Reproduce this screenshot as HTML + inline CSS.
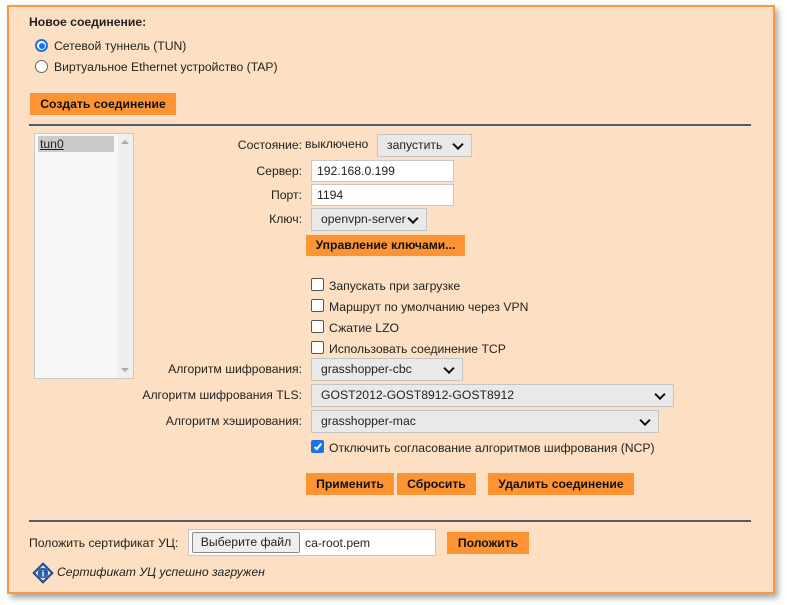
<!DOCTYPE html>
<html><head><meta charset="utf-8"><style>
*{box-sizing:border-box}
body{margin:0;width:787px;height:605px;background:#fff;font-family:"Liberation Sans","DejaVu Sans",sans-serif;font-size:12.2px;color:#222;position:relative;overflow:hidden}
.p{position:absolute;left:7px;top:5px;width:768px;height:589px;background:#fde0c3;border:2px solid #fb9a3c;box-shadow:3px 4px 6px rgba(0,0,0,.35)}
.a{position:absolute;white-space:nowrap;line-height:16px}
.btn{position:absolute;background:#fd9433;font-weight:bold;color:#111;text-align:center;font-size:12.2px}
.in{position:absolute;background:#fff;border:1px solid #c8c8c8;padding-left:5px}
.sel{position:absolute;background:#e9e9e9;border:1px solid #c4c4c4;padding-left:9px}
.sel:after{content:"";position:absolute;right:9px;top:50%;width:6px;height:6px;border-right:2px solid #111;border-bottom:2px solid #111;transform:translateY(-70%) rotate(45deg)}
.cb{position:absolute;width:13px;height:13px;border:1px solid #555;border-radius:2px;background:#fff}
.rad{position:absolute;width:13px;height:13px;border:1px solid #666;border-radius:50%;background:#fff}
.line{position:absolute;left:29px;width:722px;height:1.5px;background:#4a5e6e}
.r{text-align:right}
</style></head><body>
<div class="p"></div>
<div class="a" style="left:29px;top:14px;font-weight:bold">Новое соединение:</div>
<div class="rad" style="left:35px;top:39px;border:2px solid #1a73e8"><div style="position:absolute;left:1.5px;top:1.5px;width:6px;height:6px;border-radius:50%;background:#1a73e8"></div></div>
<div class="a" style="left:54px;top:38px">Сетевой туннель (TUN)</div>
<div class="rad" style="left:35px;top:60px"></div>
<div class="a" style="left:54px;top:59px">Виртуальное Ethernet устройство (TAP)</div>
<div class="btn" style="left:30px;top:93px;width:146px;height:22px;line-height:22px">Создать соединение</div>
<div class="line" style="top:124px"></div>

<div style="position:absolute;left:34px;top:133px;width:100px;height:246px;background:#f7f7f7;border:1px solid #c9c9c9">
 <div style="position:absolute;left:3px;top:2px;width:76px;height:16px;background:#cbcbcb;padding-left:2px;text-decoration:underline;line-height:16px">tun0</div>
 <div style="position:absolute;right:0;top:0;width:15px;height:244px;background:#efefef"></div>
 <div style="position:absolute;right:4px;top:6px;border:4px solid transparent;border-bottom:4px solid #aaa;border-top:0"></div>
 <div style="position:absolute;right:4px;bottom:6px;border:4px solid transparent;border-top:4px solid #aaa;border-bottom:0"></div>
</div>

<div class="a r" style="left:150px;width:152px;top:137px">Состояние:</div>
<div class="a" style="left:305px;top:136px">выключено</div>
<div class="sel" style="left:377px;top:134px;width:95px;height:23px;line-height:21px">запустить</div>
<div class="a r" style="left:150px;width:152px;top:163px">Сервер:</div>
<div class="in" style="left:311px;top:160px;width:143px;height:22px;line-height:20px">192.168.0.199</div>
<div class="a r" style="left:150px;width:152px;top:187px">Порт:</div>
<div class="in" style="left:311px;top:184px;width:143px;height:22px;line-height:20px">1194</div>
<div class="a r" style="left:150px;width:152px;top:211px">Ключ:</div>
<div class="sel" style="left:311px;top:208px;width:116px;height:23px;line-height:21px">openvpn-server</div>
<div class="btn" style="left:306px;top:235px;width:159px;height:21px;line-height:21px">Управление ключами...</div>

<div class="cb" style="left:311px;top:278px"></div><div class="a" style="left:329px;top:278px">Запускать при загрузке</div>
<div class="cb" style="left:311px;top:299px"></div><div class="a" style="left:329px;top:299px">Маршрут по умолчанию через VPN</div>
<div class="cb" style="left:311px;top:320px"></div><div class="a" style="left:329px;top:320px">Сжатие LZO</div>
<div class="cb" style="left:311px;top:341px"></div><div class="a" style="left:329px;top:341px">Использовать соединение TCP</div>

<div class="a r" style="left:100px;width:202px;top:361px">Алгоритм шифрования:</div>
<div class="sel" style="left:311px;top:358px;width:152px;height:23px;line-height:21px">grasshopper-cbc</div>
<div class="a r" style="left:100px;width:202px;top:387px">Алгоритм шифрования TLS:</div>
<div class="sel" style="left:311px;top:384px;width:363px;height:23px;line-height:21px">GOST2012-GOST8912-GOST8912</div>
<div class="a r" style="left:100px;width:202px;top:413px">Алгоритм хэширования:</div>
<div class="sel" style="left:311px;top:410px;width:348px;height:23px;line-height:21px">grasshopper-mac</div>

<div class="cb" style="left:311px;top:440px;background:#1a73e8;border-color:#1a73e8"><div style="position:absolute;left:3.5px;top:0.5px;width:4px;height:8px;border-right:2px solid #fff;border-bottom:2px solid #fff;transform:rotate(40deg)"></div></div>
<div class="a" style="left:329px;top:440px">Отключить согласование алгоритмов шифрования (NCP)</div>

<div class="btn" style="left:306px;top:473px;width:88px;height:22px;line-height:22px">Применить</div>
<div class="btn" style="left:397px;top:473px;width:79px;height:22px;line-height:22px">Сбросить</div>
<div class="btn" style="left:488px;top:473px;width:146px;height:22px;line-height:22px">Удалить соединение</div>

<div class="line" style="top:520px"></div>
<div class="a" style="left:29px;top:535px">Положить сертификат УЦ:</div>
<div style="position:absolute;left:188px;top:529px;width:248px;height:27px;background:#fff;border:1px solid #c8c8c8">
 <div style="position:absolute;left:3px;top:2px;width:108px;height:21px;background:#efefef;border:1px solid #8a8a8a;border-radius:2px;text-align:center;line-height:19px">Выберите файл</div>
 <div class="a" style="left:116px;top:5px">ca-root.pem</div>
</div>
<div class="btn" style="left:447px;top:532px;width:82px;height:22px;line-height:22px">Положить</div>

<svg style="position:absolute;left:32px;top:562px" width="22" height="22" viewBox="0 0 22 22"><path d="M11 1 L21 11 L11 21 L1 11 Z" fill="#2c5fa6" stroke="#1d3f78"/><path d="M11 3.5 L18.5 11 L11 18.5 L3.5 11 Z" fill="#fff"/><circle cx="11" cy="11" r="5.3" fill="#2c5fa6"/><text x="11" y="14.5" font-size="9" font-weight="bold" fill="#fff" text-anchor="middle" font-family="Liberation Serif,serif">i</text></svg>
<div class="a" style="left:57px;top:564px;font-style:italic">Сертификат УЦ успешно загружен</div>
</body></html>
